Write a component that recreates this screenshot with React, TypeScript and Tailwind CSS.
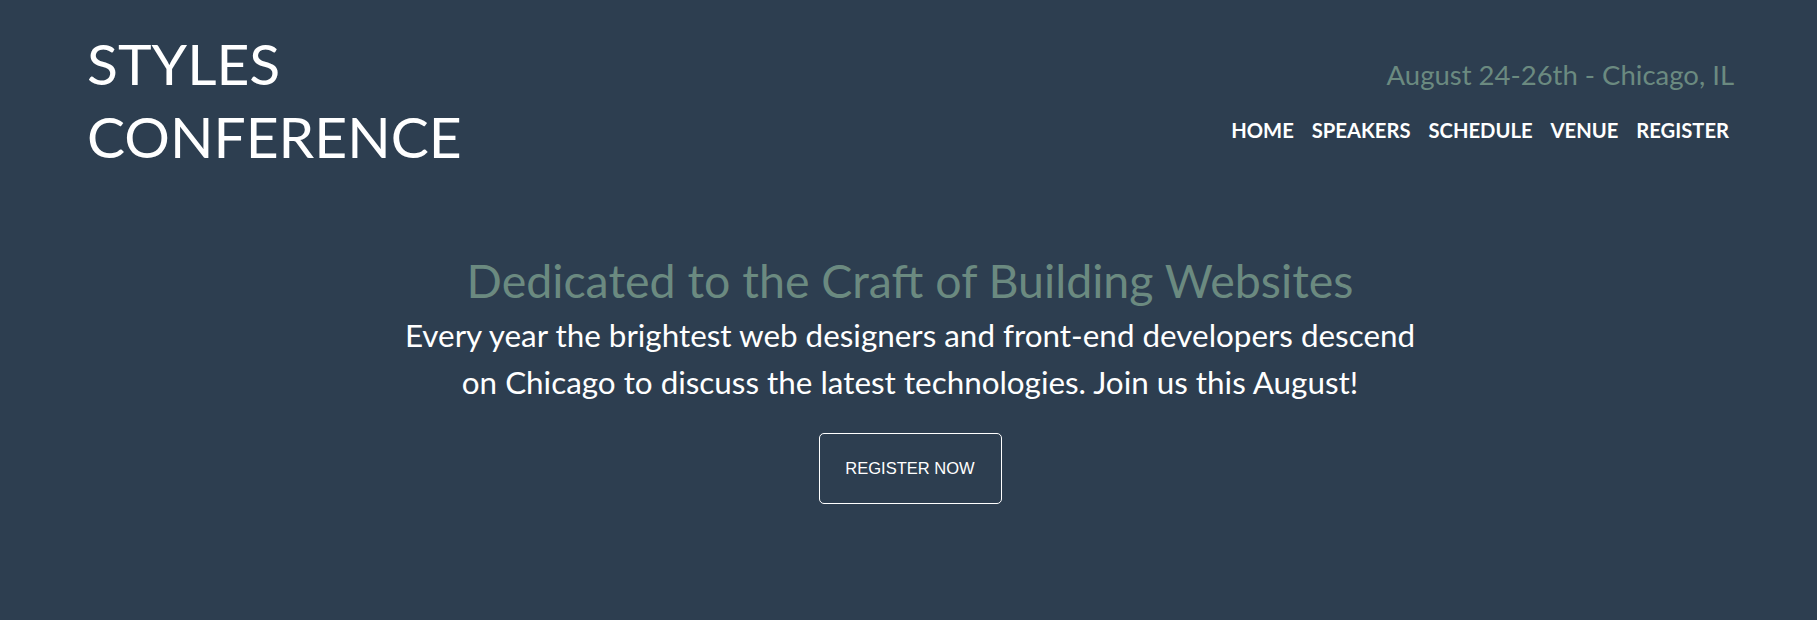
export default function App() {
  return (
    <div className="min-h-[620px] w-full bg-[#2d3e50] text-white" style={{ fontFamily: 'Lato, "Noto Sans", sans-serif' }}>
      <header className="flex items-start justify-between pl-[87px] pr-[83px] pt-[27px]">
        <h1 className="text-[57px] leading-[73px] font-normal text-white">
          STYLES
          <br />
          CONFERENCE
        </h1>
        <div className="mt-[34px] flex flex-col items-end gap-[31px]">
          <p className="text-[27.5px] leading-none text-[#6b8a80]">August 24-26th - Chicago, IL</p>
          <nav className="flex gap-[18px] pr-[5px] text-[20.2px] leading-none font-bold text-white">
            <a href="#">HOME</a>
            <a href="#">SPEAKERS</a>
            <a href="#">SCHEDULE</a>
            <a href="#">VENUE</a>
            <a href="#">REGISTER</a>
          </nav>
        </div>
      </header>
      <section className="mt-[84px] flex flex-col items-center pl-[3px] text-center">
        <h2 className="text-[46.5px] leading-none font-normal text-[#6b8a80]">Dedicated to the Craft of Building Websites</h2>
        <p className="mt-[8px] text-[31.4px] leading-[47px] text-white">
          Every year the brightest web designers and front-end developers descend
          <br />
          on Chicago to discuss the latest technologies. Join us this August!
        </p>
        <a
          href="#"
          className="mt-[27px] flex h-[71px] w-[183px] items-center justify-center rounded-[5px] border border-white text-[16.5px] text-white"
          style={{ fontFamily: '"Liberation Sans", Arial, sans-serif' }}
        >
          REGISTER NOW
        </a>
      </section>
    </div>
  );
}
